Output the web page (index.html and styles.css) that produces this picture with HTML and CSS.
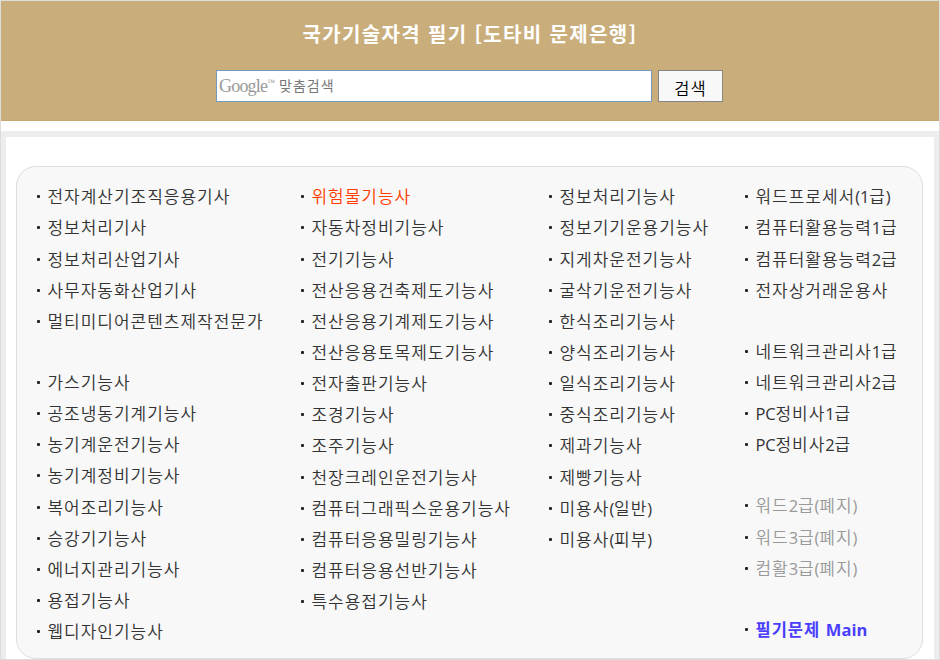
FILE: index.html
```html
<!DOCTYPE html>
<html lang="ko">
<head>
<meta charset="utf-8">
<title>국가기술자격 필기</title>
<link rel="stylesheet" href="styles.css">
</head>
<body>
<div class="page">
<header class="header">
<h1>국가기술자격 필기 [도타비 문제은행]</h1>
<div class="search">
<div class="field"><span class="google">Google</span><span class="tm">™</span><span class="hint">맞춤검색</span></div>
<button class="button" type="button">검색</button>
</div>
</header>
<main class="frame">
<div class="panel">
<ul class="list">
<li>전자계산기조직응용기사</li>
<li>정보처리기사</li>
<li>정보처리산업기사</li>
<li>사무자동화산업기사</li>
<li>멀티미디어콘텐츠제작전문가</li>
<li class="gap">가스기능사</li>
<li>공조냉동기계기능사</li>
<li>농기계운전기능사</li>
<li>농기계정비기능사</li>
<li>복어조리기능사</li>
<li>승강기기능사</li>
<li>에너지관리기능사</li>
<li>용접기능사</li>
<li>웹디자인기능사</li>
</ul>
<ul class="list">
<li><span class="hot">위험물기능사</span></li>
<li>자동차정비기능사</li>
<li>전기기능사</li>
<li>전산응용건축제도기능사</li>
<li>전산응용기계제도기능사</li>
<li>전산응용토목제도기능사</li>
<li>전자출판기능사</li>
<li>조경기능사</li>
<li>조주기능사</li>
<li>천장크레인운전기능사</li>
<li>컴퓨터그래픽스운용기능사</li>
<li>컴퓨터응용밀링기능사</li>
<li>컴퓨터응용선반기능사</li>
<li>특수용접기능사</li>
</ul>
<ul class="list">
<li>정보처리기능사</li>
<li>정보기기운용기능사</li>
<li>지게차운전기능사</li>
<li>굴삭기운전기능사</li>
<li>한식조리기능사</li>
<li>양식조리기능사</li>
<li>일식조리기능사</li>
<li>중식조리기능사</li>
<li>제과기능사</li>
<li>제빵기능사</li>
<li>미용사<i>(</i>일반<i>)</i></li>
<li>미용사<i>(</i>피부<i>)</i></li>
</ul>
<ul class="list">
<li>워드프로세서<i>(1</i>급<i>)</i></li>
<li>컴퓨터활용능력<i>1</i>급</li>
<li>컴퓨터활용능력<i>2</i>급</li>
<li>전자상거래운용사</li>
<li class="gap">네트워크관리사<i>1</i>급</li>
<li>네트워크관리사<i>2</i>급</li>
<li><i>PC</i>정비사<i>1</i>급</li>
<li><i>PC</i>정비사<i>2</i>급</li>
<li class="gap"><span class="old">워드<i>2</i>급<i>(</i>폐지<i>)</i></span></li>
<li><span class="old">워드<i>3</i>급<i>(</i>폐지<i>)</i></span></li>
<li><span class="old">컴활<i>3</i>급<i>(</i>폐지<i>)</i></span></li>
<li class="gap"><span class="main">필기문제 <i>Main</i></span></li>
</ul>
</div>
</main>
</div>
</body>
</html>
```
FILE: styles.css
```css
* { box-sizing: border-box; }
body {
  margin: 0;
  background: #fff;
  font-family: "Noto Sans CJK KR", sans-serif;
}
.page {
  width: 940px;
  height: 660px;
  border: 1px solid #ddd;
  overflow: hidden;
  display: flex;
  flex-direction: column;
}
.header {
  height: 120px;
  background: #c9ae7c;
  border-bottom: 1px solid #c5a66f;
  flex: none;
}
h1 {
  margin: 0;
  padding-top: 18px;
  font-size: 20px;
  line-height: 30px;
  letter-spacing: 1.35px;
  color: #fff;
  text-align: center;
  white-space: nowrap;
}
.search {
  display: flex;
  gap: 6px;
  margin: 21px 0 0 215px;
}
.field {
  width: 436px;
  height: 32px;
  border: 1px solid #7499c2;
  background: #fff;
  display: flex;
  padding-left: 2px;
  line-height: 30px;
  color: #777;
}
.google {
  font: 18px/30px "Liberation Serif", serif;
  letter-spacing: -0.8px;
  color: #999;
}
.tm {
  font: 8px/24px "Liberation Serif", serif;
  color: #999;
}
.hint {
  margin-left: 4px;
  font-size: 14px;
  line-height: 28px;
  letter-spacing: 1px;
}
.button {
  width: 65px;
  height: 32px;
  padding: 3px 0 0;
  border: 1px solid #858585;
  background: #f8f8f8;
  font: 350 16.5px/26px "Noto Sans CJK KR", sans-serif;
  letter-spacing: 1px;
  color: #000;
}
.frame {
  margin-top: 10px;
  border: solid #ededed;
  border-width: 6px 5px 0;
  padding: 29px 11px 0 10px;
  flex: 1;
}
.panel {
  height: 493px;
  border: 1px solid #ddd;
  border-radius: 20px;
  background: #f8f8f8;
  padding: 14.2px 0 0 18px;
  display: grid;
  grid-template-columns: 264px 248px 196px 1fr;
}
.list {
  list-style: none;
  margin: 0;
  padding: 0;
  font-size: 17px;
  font-weight: 350;
  letter-spacing: 0.98px;
  line-height: 30.6px;
  color: #333;
}
li {
  height: 31.17px;
  white-space: nowrap;
}
li::before {
  content: "";
  display: inline-block;
  width: 3px;
  height: 3px;
  border-radius: 1px;
  background: #222;
  margin: 0 7.5px 0 2px;
  vertical-align: 5px;
}
.gap { margin-top: 30px; }
i {
  font-family: "Open Sans", sans-serif;
  font-style: normal;
  font-weight: 400;
  font-size: 16.5px;
  line-height: 1;
  letter-spacing: -0.2px;
}
.hot { color: #ff3c00; }
.old { color: #999; }
.main { color: #4a3fff; font-weight: 700; font-size: 16.5px; }
.main i { font-weight: 700; letter-spacing: 0.1px; }
```
